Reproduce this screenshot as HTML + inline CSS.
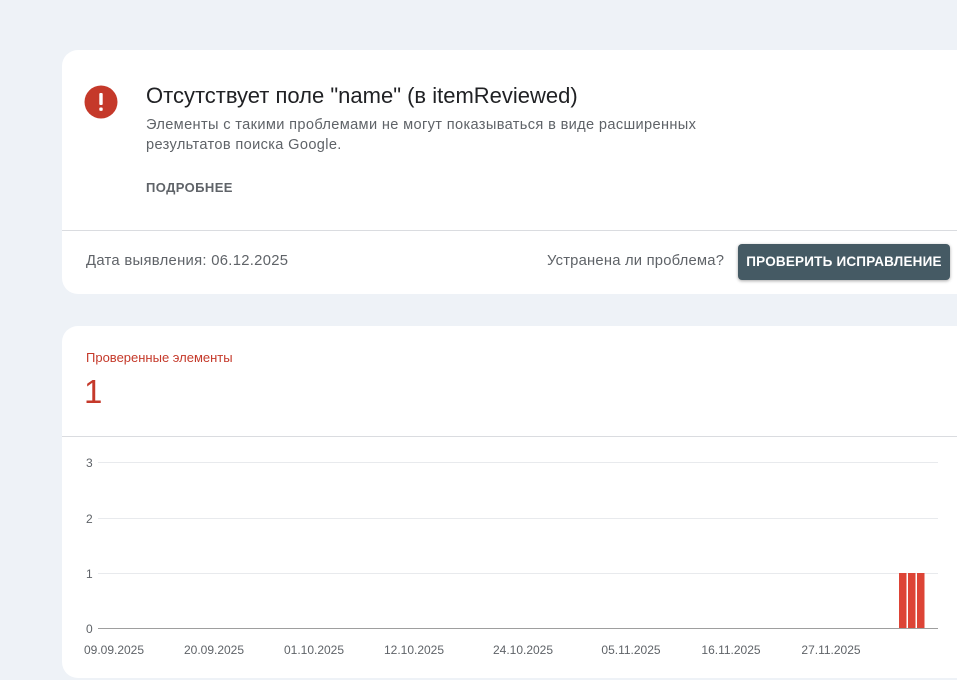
<!DOCTYPE html>
<html><head><meta charset="utf-8"><style>
*{margin:0;padding:0;box-sizing:border-box}
body{width:957px;height:680px;background:#eef2f7;font-family:"Liberation Sans",Roboto,sans-serif;position:relative;overflow:hidden}
.card{position:absolute;background:#fff;left:62px;width:920px;border-radius:16px}
.t{position:absolute;white-space:nowrap}
</style></head><body>
<div class="card" style="top:50px;height:244px">
  <svg style="position:absolute;left:22px;top:35px" width="34" height="34" viewBox="0 0 34 34"><circle cx="17" cy="17" r="16.5" fill="#c5392a"/><rect x="15.3" y="8" width="3.4" height="12" rx="1" fill="#fff"/><rect x="15.3" y="22.5" width="3.4" height="3.4" rx="1" fill="#fff"/></svg>
  <div class="t" style="left:84px;top:33px;font-size:22px;color:#202124">Отсутствует поле "name" (в itemReviewed)</div>
  <div class="t" style="left:84px;top:65px;font-size:14.6px;line-height:20px;color:#5f6368;letter-spacing:.35px">Элементы с такими проблемами не могут показываться в виде расширенных<br>результатов поиска Google.</div>
  <div class="t" style="left:84px;top:130px;font-size:13px;font-weight:bold;color:#5f6368;letter-spacing:.4px">ПОДРОБНЕЕ</div>
  <div style="position:absolute;left:0;right:0;top:180px;height:1px;background:#dadce0"></div>
  <div class="t" style="left:24px;top:203px;font-size:14.8px;color:#5f6368;letter-spacing:.3px">Дата выявления: 06.12.2025</div>
  <div class="t" style="left:485px;top:203px;font-size:14.8px;color:#5f6368;letter-spacing:.2px">Устранена ли проблема?</div>
  <div style="position:absolute;left:676px;top:194px;width:212px;height:36px;background:#455a64;border-radius:4px;box-shadow:0 1px 3px rgba(0,0,0,.35);color:#fff;font-weight:bold;font-size:13.5px;line-height:36px;text-align:center;letter-spacing:.2px">ПРОВЕРИТЬ ИСПРАВЛЕНИЕ</div>
</div>
<div class="card" style="top:326px;height:352px">
  <div class="t" style="left:24px;top:24px;font-size:13px;color:#c5392a">Проверенные элементы</div>
  <div class="t" style="left:22px;top:47px;font-size:33px;color:#c5392a">1</div>
  <div style="position:absolute;left:0;right:0;top:110px;height:1px;background:#dadce0"></div>
</div>
<svg style="position:absolute;left:0;top:0" width="957" height="680">
  <g stroke="#e8eaed" stroke-width="1"><line x1="98" y1="462.5" x2="938" y2="462.5"/><line x1="98" y1="518.5" x2="938" y2="518.5"/><line x1="98" y1="573.5" x2="938" y2="573.5"/></g>
  <g fill="#dd4436"><rect x="899" y="573" width="7.5" height="55"/><rect x="908" y="573" width="7.5" height="55"/><rect x="917" y="573" width="7.5" height="55"/></g>
  <line x1="98" y1="628.5" x2="938" y2="628.5" stroke="#9e9e9e" stroke-width="1"/>
  <g font-family="Liberation Sans,sans-serif" font-size="12" fill="#5f6368">
    <text x="86" y="467">3</text><text x="86" y="523">2</text><text x="86" y="578">1</text><text x="86" y="633">0</text>
    <g text-anchor="middle">
    <text x="114" y="654">09.09.2025</text><text x="214" y="654">20.09.2025</text><text x="314" y="654">01.10.2025</text><text x="414" y="654">12.10.2025</text><text x="523" y="654">24.10.2025</text><text x="631" y="654">05.11.2025</text><text x="731" y="654">16.11.2025</text><text x="831" y="654">27.11.2025</text>
    </g>
  </g>
</svg>
</body></html>
